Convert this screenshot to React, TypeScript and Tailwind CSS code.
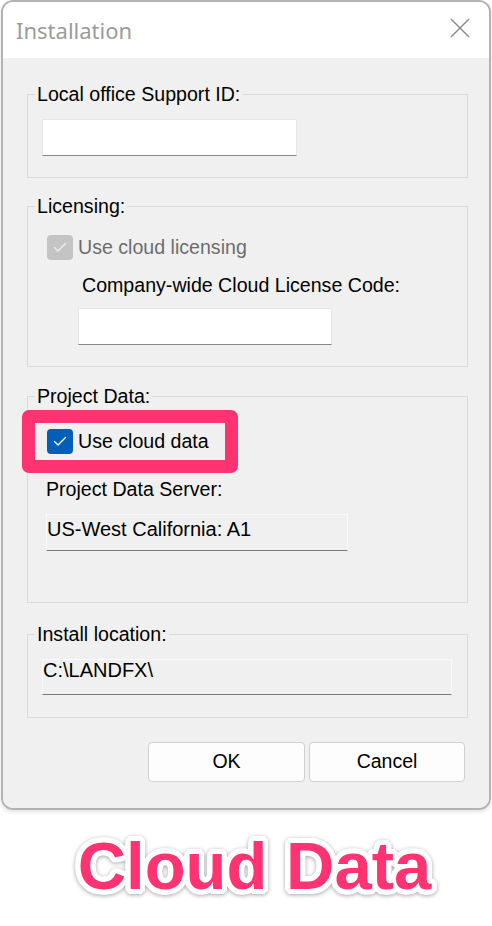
import React from "react";

function Check({ disabled }: { disabled?: boolean }) {
  return (
    <div
      className={
        "w-[26px] h-[25px] rounded-[4px] flex items-center justify-center shrink-0 " +
        (disabled ? "bg-[#c4c4c4]" : "bg-[#005fb8]")
      }
    >
      <svg width="26" height="25" viewBox="0 0 26 25">
        <polyline
          points="7.5,12.5 11,16 18.5,8.5"
          fill="none"
          stroke={disabled ? "#efefef" : "#ffffff"}
          strokeWidth="1.4"
          strokeLinecap="round"
          strokeLinejoin="round"
        />
      </svg>
    </div>
  );
}

export default function App() {
  return (
    <div className="w-[492px] min-h-[926px] bg-white font-['Liberation_Sans',Arial,sans-serif] text-black">
      <div className="ml-[1px] w-[490px] border-2 border-[#b3b3b3] rounded-[12px] overflow-hidden shadow-[0_2px_4px_rgba(0,0,0,0.12)]">
        {/* Title bar */}
        <div className="h-[56px] bg-white flex items-center justify-between pl-[13px] pr-[19px]">
          <span className="font-['Noto_Sans',sans-serif] text-[22px] text-[#9b9b9b]">Installation</span>
          <svg width="20" height="20" viewBox="0 0 20 20" className="mb-[4px]">
            <line x1="1" y1="1" x2="19" y2="19" stroke="#8a8a8a" strokeWidth="1.5" />
            <line x1="19" y1="1" x2="1" y2="19" stroke="#8a8a8a" strokeWidth="1.5" />
          </svg>
        </div>

        {/* Body */}
        <div className="bg-[#f0f0f0] pt-[25px] pl-[24px] pr-[21px] pb-[26px] text-[19.6px]">
          {/* Local office */}
          <fieldset className="border border-[#dadada]">
            <legend className="ml-[7px] px-[2px] leading-[22px]">Local office Support ID:</legend>
            <div className="pl-[14px] pt-[14px] pb-[21px]">
              <div className="w-[255px] h-[37px] bg-white border border-[#e6e6e6] border-b-[#868686]" />
            </div>
          </fieldset>

          {/* Licensing */}
          <fieldset className="mt-[17px] border border-[#dadada]">
            <legend className="ml-[7px] px-[2px] leading-[22px]">Licensing:</legend>
            <div className="pl-[19px] pt-[17px] pb-[21px]">
              <div className="flex items-center gap-[5px] h-[26px]">
                <Check disabled />
                <span className="text-[#6d6d6d] leading-[22px]">Use cloud licensing</span>
              </div>
              <div className="ml-[35px] mt-[14px] leading-[22px]">Company-wide Cloud License Code:</div>
              <div className="ml-[31px] mt-[12px] w-[254px] h-[37px] bg-white border border-[#e6e6e6] border-b-[#868686]" />
            </div>
          </fieldset>

          {/* Project Data */}
          <fieldset className="mt-[18px] border border-[#dadada]">
            <legend className="ml-[7px] px-[2px] leading-[22px]">Project Data:</legend>
            <div className="pl-[19px] pt-[21px] pb-[51px]">
              <div className="relative flex items-center gap-[5px] h-[26px]">
                <div className="absolute left-[-25px] top-[-18px] w-[216px] h-[63px] border-[13px] border-[#ff3371] rounded-[7px] z-10" />
                <Check />
                <span className="leading-[22px]">Use cloud data</span>
              </div>
              <div className="ml-[-1px] mt-[24px] leading-[22px]">Project Data Server:</div>
              <div className="ml-[-1px] mt-[14px] w-[302px] h-[37px] bg-[#f0f0f0] border border-[#fafafa] border-b-[#7a7a7a] pt-[4px] text-[20px] leading-[20px]">
                US-West California: A1
              </div>
            </div>
          </fieldset>

          {/* Install location */}
          <fieldset className="mt-[20px] border border-[#dadada]">
            <legend className="ml-[7px] px-[2px] leading-[22px]">Install location:</legend>
            <div className="pl-[14px] pt-[14px] pb-[22px]">
              <div className="w-[410px] h-[36px] bg-[#f0f0f0] border border-[#fafafa] border-b-[#7a7a7a] text-[20px] leading-[20px]">
                C:\LANDFX\
              </div>
            </div>
          </fieldset>

          {/* Buttons */}
          <div className="mt-[24px] flex justify-end gap-[4px] pr-[3px]">
            <button className="w-[157px] h-[40px] rounded-[4px] border border-[#d0d0d0] bg-[#fdfdfd] text-[19.5px]">OK</button>
            <button className="w-[156px] h-[40px] rounded-[4px] border border-[#d0d0d0] bg-[#fdfdfd] text-[19.5px]">Cancel</button>
          </div>
        </div>
      </div>

      {/* Caption */}
      <div className="mt-[22px] flex justify-center pl-[17px]">
        <span className="font-['Liberation_Sans',Arial,sans-serif] font-bold text-[67px] leading-[67px] text-[#ff3371] [text-shadow:0_5px_0_#fff,0_-5px_0_#fff,5px_0_0_#fff,-5px_0_0_#fff,4px_3px_0_#fff,-4px_3px_0_#fff,4px_-3px_0_#fff,-4px_-3px_0_#fff,3px_4px_0_#fff,-3px_4px_0_#fff,3px_-4px_0_#fff,-3px_-4px_0_#fff,2px_5px_0_#fff,-2px_5px_0_#fff,2px_-5px_0_#fff,-2px_-5px_0_#fff,5px_2px_0_#fff,-5px_2px_0_#fff,5px_-2px_0_#fff,-5px_-2px_0_#fff] [filter:drop-shadow(0_1px_2px_rgba(0,0,0,0.35))]">
          Cloud Data
        </span>
      </div>
    </div>
  );
}
